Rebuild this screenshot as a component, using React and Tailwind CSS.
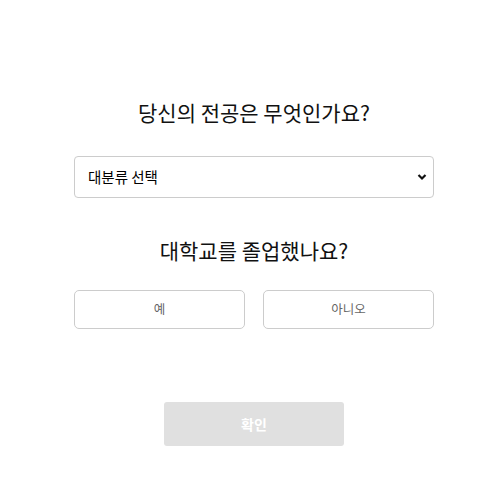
export default function App() {
  const font = { fontFamily: '"Noto Sans CJK KR", "Noto Sans", sans-serif' };
  return (
    <div className="w-[485px] h-[500px] bg-white" style={font}>
      <div className="flex flex-col pl-[74px] pt-[98px] w-[434px]">
        <h1 className="h-[28px] leading-[28px] text-[21px] text-center text-[#111]">당신의 전공은 무엇인가요?</h1>
        <div className="mt-[30px] relative h-[42px] w-[360px] rounded-[4px] border border-[#cccccc] flex items-center pl-[13px] text-[14.5px] text-black">
          <span>대분류 선택</span>
          <svg className="absolute right-[6px] top-[16px]" width="10" height="8" viewBox="0 0 10 8">
            <path d="M1.5 2 L5 5.5 L8.5 2" fill="none" stroke="#111" strokeWidth="2.2" />
          </svg>
        </div>
        <h2 className="mt-[38px] h-[28px] leading-[28px] text-[21px] text-center text-[#111]">대학교를 졸업했나요?</h2>
        <div className="mt-[26px] flex gap-[18px] w-[360px]">
          <button className="h-[39px] w-[171px] rounded-[5px] border border-[#cccccc] text-[12.5px] text-[#666]">예</button>
          <button className="h-[39px] w-[171px] rounded-[5px] border border-[#cccccc] text-[12.5px] text-[#666]">아니오</button>
        </div>
        <div className="mt-[73px] flex justify-center w-[360px]">
          <button className="h-[44px] w-[180px] rounded-[3px] bg-[#e0e0e0] text-white font-bold text-[14px]">확인</button>
        </div>
      </div>
    </div>
  );
}
